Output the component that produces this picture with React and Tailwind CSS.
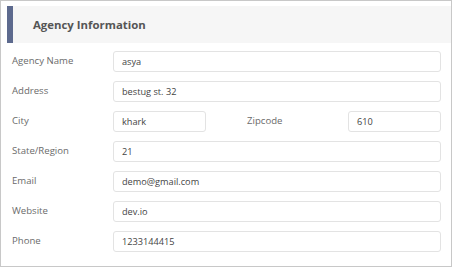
import React from 'react';

const Field = ({ value, className = '' }) => (
    <div className={`h-[21px] flex items-center px-[8px] border border-[#e3e3e3] rounded-[3px] bg-white text-[9.2px] text-[#444] ${className}`}>
        {value}
    </div>
);

const Row = ({ label, value }) => (
    <div className="flex items-center h-[21px]">
        <div className="w-[101px] text-[9.6px] text-[#6b6b6b]">{label}</div>
        <Field value={value} className="flex-1" />
    </div>
);

const App = () => {
    return (
        <div
            className="w-[452px] h-[267px] bg-white border border-[#c8c8c8] pt-[5px] pl-[6px] overflow-hidden"
            style={{ fontFamily: '"Open Sans", "Liberation Sans", sans-serif' }}
        >
            {/* Header */}
            <div className="flex h-[37px] bg-[#f6f6f6]">
                <div className="w-[6px] bg-[#5d6a8e]"></div>
                <h2 className="flex items-center pl-[20px] text-[11.4px] font-bold text-[#555]">Agency Information</h2>
            </div>

            {/* Form */}
            <div className="flex flex-col gap-[9px] mt-[8px] pl-[5px] mr-[10px]">
                <Row label="Agency Name" value="asya" />
                <Row label="Address" value="bestug st. 32" />
                <div className="flex items-center h-[21px]">
                    <div className="w-[101px] text-[9.6px] text-[#6b6b6b]">City</div>
                    <Field value="khark" className="w-[93px]" />
                    <div className="w-[101px] ml-[41px] text-[9.6px] text-[#6b6b6b]">Zipcode</div>
                    <Field value="610" className="w-[93px]" />
                </div>
                <Row label="State/Region" value="21" />
                <Row label="Email" value="demo@gmail.com" />
                <Row label="Website" value="dev.io" />
                <Row label="Phone" value="1233144415" />
            </div>
        </div>
    );
};

export default App;
